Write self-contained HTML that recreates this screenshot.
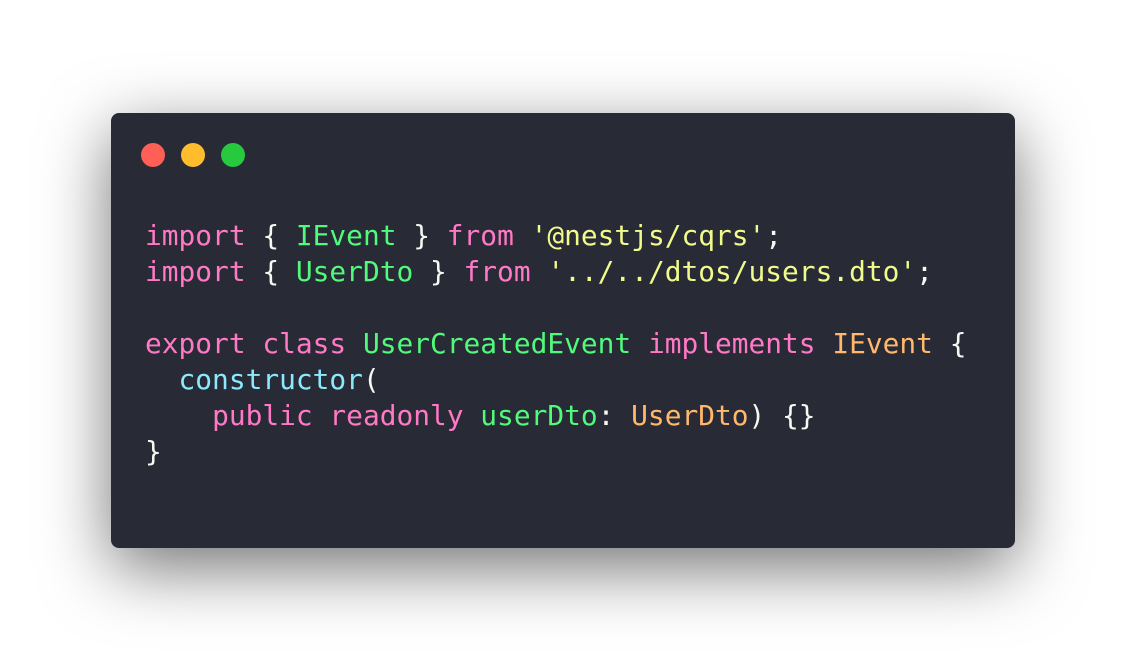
<!DOCTYPE html>
<html><head><style>
html,body{margin:0;width:1126px;height:662px;background:#fff;overflow:hidden}
.win{position:absolute;left:111px;top:113px;width:904px;height:435px;background:#282a36;border-radius:8px;box-shadow:0 20px 68px rgba(0,0,0,0.55)}
.dot{position:absolute;top:30px;width:24px;height:24px;border-radius:50%}
pre{position:absolute;left:34px;top:105px;margin:0;font-family:"DejaVu Sans Mono","Liberation Mono",monospace;font-size:27.85px;line-height:36px;color:#f8f8f2}
.k{color:#ff79c6}.g{color:#50fa7b}.s{color:#f1fa8c}.o{color:#ffb86c}.c{color:#8be9fd}
</style></head><body>
<div class="win">
<div class="dot" style="left:30px;background:#ff5f56"></div>
<div class="dot" style="left:70px;background:#ffbd2e"></div>
<div class="dot" style="left:110px;background:#27c93f"></div>
<pre><span class="k">import</span> { <span class="g">IEvent</span> } <span class="k">from</span> <span class="s">'@nestjs/cqrs'</span>;
<span class="k">import</span> { <span class="g">UserDto</span> } <span class="k">from</span> <span class="s">'../../dtos/users.dto'</span>;

<span class="k">export</span> <span class="k">class</span> <span class="g">UserCreatedEvent</span> <span class="k">implements</span> <span class="o">IEvent</span> {
  <span class="c">constructor</span>(
    <span class="k">public</span> <span class="k">readonly</span> <span class="g">userDto</span>: <span class="o">UserDto</span>) {}
}</pre>
</div>
</body></html>
